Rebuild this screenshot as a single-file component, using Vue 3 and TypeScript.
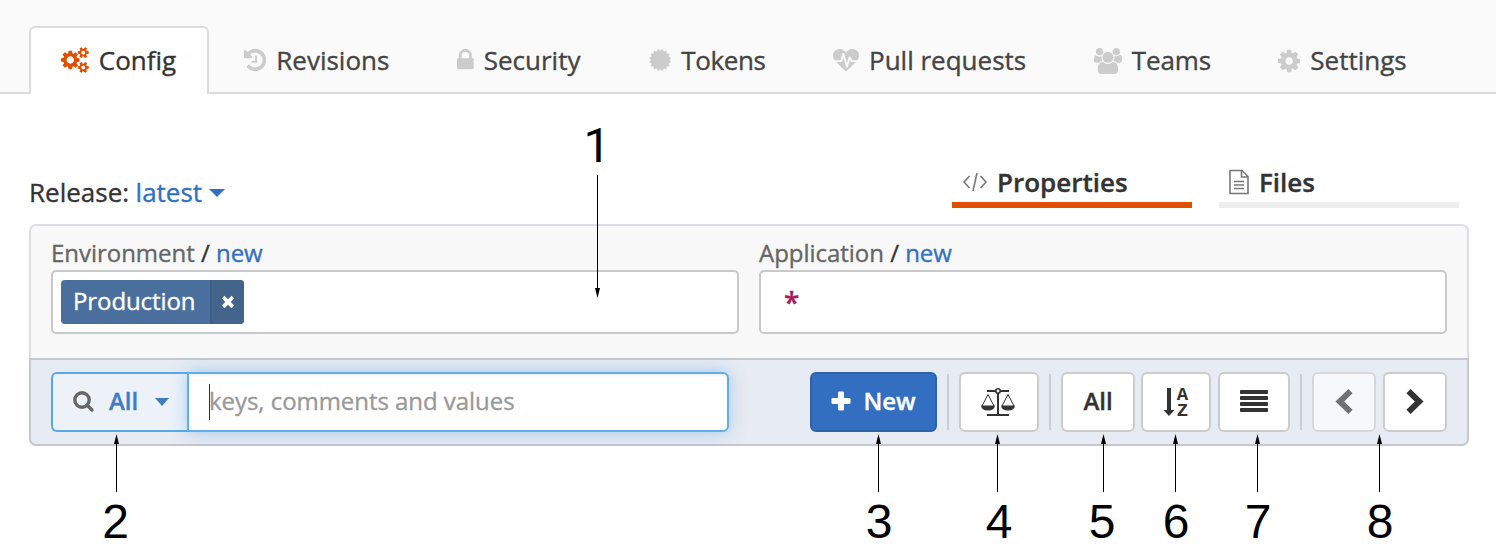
<script setup lang="ts">
interface Tab {
  id: string
  label: string
  box: string
  path: string
}

interface Callout {
  n: number
  textX: number
  arrowX: number
}

const seal = (() => {
  const pts: string[] = []
  const spikes = 16
  for (let i = 0; i < spikes * 2; i++) {
    const r = i % 2 ? 635 : 785
    const a = (Math.PI * i) / spikes + Math.PI / spikes
    pts.push(`${(896 + r * Math.sin(a)).toFixed(0)} ${(896 - r * Math.cos(a)).toFixed(0)}`)
  }
  return `M${pts.join('L')}z`
})()

const tabs: Tab[] = [
  {
    id: 'config',
    label: 'Config',
    box: '-64 0 1920 1792',
    path: 'M832 896q0-106-75-181t-181-75-181 75-75 181 75 181 181 75 181-75 75-181zm768 512q0-52-38-90t-90-38-90 38-38 90q0 53 37.5 90.5t90.5 37.5 90.5-37.5 37.5-90.5zm0-1024q0-52-38-90t-90-38-90 38-38 90q0 53 37.5 90.5t90.5 37.5 90.5-37.5 37.5-90.5zm-384 421v185q0 10-7 19.5t-16 10.5l-155 24q-11 35-32 76 34 48 90 115 7 11 7 20 0 12-7 19-23 30-82.5 89.5t-78.5 59.5q-11 0-21-7l-115-90q-37 19-77 31-11 108-23 155-7 24-30 24h-186q-11 0-20-7.5t-10-17.5l-23-153q-34-10-75-31l-118 89q-7 7-20 7-11 0-21-8-144-133-144-160 0-9 7-19 10-14 41-53t47-61q-23-44-35-82l-152-24q-10-1-17-9.5t-7-19.5v-185q0-10 7-19.5t16-10.5l155-24q11-35 32-76-34-48-90-115-7-11-7-20 0-12 7-20 22-30 82-89t79-59q11 0 21 7l115 90q34-18 77-32 11-108 23-154 7-24 30-24h186q11 0 20 7.5t10 17.5l23 153q34 10 75 31l118-89q8-7 20-7 11 0 21 8 144 133 144 160 0 8-7 19-12 16-42 54t-45 60q23 48 34 82l152 23q10 2 17 10.5t7 19.5zm640 533v140q0 16-149 31-12 27-30 52 51 113 51 138 0 4-4 7-122 71-124 71-8 0-46-47t-52-68q-20 2-30 2t-30-2q-14 21-52 68t-46 47q-2 0-124-71-4-3-4-7 0-25 51-138-18-25-30-52-149-15-149-31v-140q0-16 149-31 13-29 30-52-51-113-51-138 0-4 4-7 4-2 35-20t59-34 30-16q8 0 46 46.5t52 67.5q20-2 30-2t30 2q51-71 92-112l6-2q4 0 124 70 4 3 4 7 0 25-51 138 17 23 30 52 149 15 149 31zm0-1024v140q0 16-149 31-12 27-30 52 51 113 51 138 0 4-4 7-122 71-124 71-8 0-46-47t-52-68q-20 2-30 2t-30-2q-14 21-52 68t-46 47q-2 0-124-71-4-3-4-7 0-25 51-138-18-25-30-52-149-15-149-31v-140q0-16 149-31 13-29 30-52-51-113-51-138 0-4 4-7 4-2 35-20t59-34 30-16q8 0 46 46.5t52 67.5q20-2 30-2t30 2q51-71 92-112l6-2q4 0 124 70 4 3 4 7 0 25-51 138 17 23 30 52 149 15 149 31z',
  },
  {
    id: 'revisions',
    label: 'Revisions',
    box: '128 0 1536 1792',
    path: 'M1664 896q0 156-61 298t-164 245-245 164-298 61q-172 0-327-72.5t-264-204.5q-7-10-6.5-22.5t8.5-20.5l137-138q10-9 25-9 16 2 23 12 73 95 179 147t225 52q104 0 198.5-40.5t163.5-109.5 109.5-163.5 40.5-198.5-40.5-198.5-109.5-163.5-163.5-109.5-198.5-40.5q-98 0-188 35.5t-160 101.5l137 138q31 30 14 69-17 40-59 40h-448q-26 0-45-19t-19-45v-448q0-42 40-59 39-17 69 14l130 129q107-101 244.5-156.5t284.5-55.5q156 0 298 61t245 164 164 245 61 298zm-640-288v448q0 14-9 23t-23 9h-320q-14 0-23-9t-9-23v-64q0-14 9-23t23-9h224v-352q0-14 9-23t23-9h64q14 0 23 9t9 23z',
  },
  {
    id: 'security',
    label: 'Security',
    box: '320 0 1152 1792',
    path: 'M640 768h512v-192q0-106-75-181t-181-75-181 75-75 181v192zm832 96v576q0 40-28 68t-68 28h-960q-40 0-68-28t-28-68v-576q0-40 28-68t68-28h32v-192q0-184 132-316t316-132 316 132 132 316v192h32q40 0 68 28t28 68z',
  },
  { id: 'tokens', label: 'Tokens', box: '128 0 1536 1792', path: seal },
  {
    id: 'pulls',
    label: 'Pull requests',
    box: '0 0 1792 1792',
    path: 'M1280 896h305q-5 6-10 10.5t-9 7.5l-3 4-623 600q-18 18-44 18t-44-18l-624-602q-5-2-21-20h369q22 0 39.5-13.5t22.5-34.5l70-281 190 667q6 20 23 33t39 13q21 0 38-13t23-33l146-485 56 112q18 35 57 35zm512-428q0 145-103 300h-369l-111-221q-8-17-25.5-27t-36.5-8q-45 5-56 46l-129 430-196-686q-6-20-23.5-33t-39.5-13-39 13.5-22 34.5l-116 464h-423q-103-155-103-300 0-220 127-344t351-124q62 0 126.5 21.5t120 58 95.5 68.5 76 68q36-36 76-68t95.5-68.5 120-58 126.5-21.5q224 0 351 124t127 344z',
  },
  {
    id: 'teams',
    label: 'Teams',
    box: '0 0 1920 1792',
    path: 'M593 896q-162 5-265 128h-134q-82 0-138-40.5t-56-118.5q0-353 124-353 6 0 43.5 21t97.5 42.5 119 21.5q67 0 133-23-5 37-5 66 0 159 93 293zm1071 637q0 120-73 189.5t-194 69.5h-874q-121 0-194-69.5t-73-189.5q0-53 3.5-103.5t14-109 26.5-108.5 43-97.5 62-81 85.5-53.5 111.5-20q10 0 43 21.5t73 48 107 48 135 21.5 135-21.5 107-48 73-48 43-21.5q61 0 111.5 20t85.5 53.5 62 81 43 97.5 26.5 108.5 14 109 3.5 103.5zm-1024-1277q0 106-75 181t-181 75-181-75-75-181 75-181 181-75 181 75 75 181zm704 384q0 159-112.5 271.5t-271.5 112.5-271.5-112.5-112.5-271.5 112.5-271.5 271.5-112.5 271.5 112.5 112.5 271.5zm576 225q0 78-56 118.5t-138 40.5h-134q-103-123-265-128 93-134 93-293 0-29-5-66 66 23 133 23 59 0 119-21.5t97.5-42.5 43.5-21q124 0 124 353zm-128-609q0 106-75 181t-181 75-181-75-75-181 75-181 181-75 181 75 75 181z',
  },
  {
    id: 'settings',
    label: 'Settings',
    box: '128 0 1536 1792',
    path: 'M1152 896q0-106-75-181t-181-75-181 75-75 181 75 181 181 75 181-75 75-181zm512-109v222q0 12-8 23t-20 13l-185 28q-19 54-39 91 35 50 107 138 10 12 10 25t-9 23q-27 37-99 108t-94 71q-12 0-26-9l-138-108q-44 23-91 38-16 136-29 186-7 28-36 28h-222q-14 0-24.5-8.5t-11.5-21.5l-28-184q-49-16-90-37l-141 107q-10 9-25 9-14 0-25-11-126-114-165-168-7-10-7-23 0-12 8-23 15-21 51-66.5t54-70.5q-27-50-41-99l-183-27q-13-2-21-12.5t-8-23.5v-222q0-12 8-23t19-13l186-28q14-46 39-92-40-57-107-138-10-12-10-24 0-10 9-23 26-36 98.5-107.5t94.5-71.5q13 0 26 10l138 107q44-23 91-38 16-136 29-186 7-28 36-28h222q14 0 24.5 8.5t11.5 21.5l28 184q49 16 90 37l142-107q9-9 24-9 13 0 25 10 129 119 165 170 7 8 7 22 0 12-8 23-15 21-51 66.5t-54 70.5q26 50 41 98l183 28q13 2 21 12.5t8 23.5z',
  },
]

const callouts: Callout[] = [
  { n: 2, textX: 115.5, arrowX: 116.5 },
  { n: 3, textX: 879, arrowX: 878.5 },
  { n: 4, textX: 999, arrowX: 997.5 },
  { n: 5, textX: 1102, arrowX: 1103.5 },
  { n: 6, textX: 1176, arrowX: 1175.5 },
  { n: 7, textX: 1258, arrowX: 1257.5 },
  { n: 8, textX: 1380, arrowX: 1379.5 },
]
</script>

<template>
  <div class="page">
    <nav class="tabs">
      <a v-for="t in tabs" :key="t.id" class="tab" :class="[t.id, { active: t.id === 'config' }]">
        <svg class="tab-icon" :viewBox="t.box"><path :d="t.path" /></svg>
        <span>{{ t.label }}</span>
      </a>
    </nav>

    <div class="head">
      <div class="release">
        <span>Release:</span>
        <a class="link">latest</a>
        <i class="caret"></i>
      </div>
      <div class="views">
        <a class="view on">
          <svg class="code-icon" viewBox="0 0 26 20">
            <path d="M7.5 4 2 10l5.500 6M18.500 4 24 10l-5.500 6M15 1l-4 18" />
          </svg>
          <span>Properties</span>
        </a>
        <a class="view files">
          <svg class="file-icon" viewBox="0 0 20 26">
            <path d="M1 1.500h12l6 6V24.500H1zM12.500 1.500V8H19M5 12.500h10M5 16h10M5 19.500h10" />
          </svg>
          <span>Files</span>
        </a>
      </div>
    </div>

    <section class="panel">
      <div class="filters">
        <div class="field">
          <div class="label"><span class="name env">Environment</span> <b>/</b> <a class="link">new</a></div>
          <div class="box">
            <div class="tag">
              <span class="tag-text">Production</span>
              <span class="tag-x">
                <svg viewBox="0 0 12 12"><path d="M1.800 1.800 10.200 10.200M10.200 1.800 1.800 10.200" /></svg>
              </span>
            </div>
          </div>
        </div>
        <div class="field">
          <div class="label"><span class="name app">Application</span> <b>/</b> <a class="link">new</a></div>
          <div class="box"><span class="star">*</span></div>
        </div>
      </div>

      <div class="toolbar">
        <div class="search">
          <div class="scope">
            <svg class="glass" viewBox="0 0 22 22">
              <circle cx="9" cy="9" r="7.200" /><path d="M14.200 14.200 19 19" />
            </svg>
            <span class="strong">All</span>
            <i class="caret"></i>
          </div>
          <div class="query"><span class="placeholder">keys, comments and values</span></div>
        </div>
        <div class="actions">
          <div class="btn primary">
            <svg class="plus" viewBox="0 0 20 20">
              <rect x="0.500" y="7" width="19" height="6" rx="1.200" />
              <rect x="7" y="0.500" width="6" height="19" rx="1.200" />
            </svg>
            <span class="strong">New</span>
          </div>
          <i class="sep"></i>
          <div class="btn compare">
            <svg class="scales" viewBox="0 0 34 28">
              <path class="beam" d="M6 3h22M17 4v22M6 27h22" />
              <path class="thin" d="M1 18 7 6.500l6 11.500M21 18l6-11.500 6 11.500" />
              <circle cx="17" cy="3" r="2.200" />
              <path class="pan" d="M0 17.500h14q-.5 5-7 5T0 17.500zM20 17.500h14q-.5 5-7 5t-7-5z" />
            </svg>
          </div>
          <i class="sep"></i>
          <div class="btn all"><span class="strong">All</span></div>
          <div class="btn sort">
            <svg class="sort-icon" viewBox="0 0 26 30">
              <path d="M4 1h4v22h3.500L6 29 .500 23H4z" />
              <text x="19.500" y="13">A</text>
              <text x="19.500" y="29">Z</text>
            </svg>
          </div>
          <div class="btn list">
            <svg class="list-icon" viewBox="0 0 28 22">
              <rect v-for="i in 4" :key="i" x="0" :y="(i - 1) * 6" width="28" height="4" rx="0.700" />
            </svg>
          </div>
          <i class="sep"></i>
          <div class="btn nav prev">
            <svg class="chev" viewBox="0 0 18 26"><path d="M15.500 2.200 4.800 12.500l10.700 10.300" /></svg>
          </div>
          <div class="btn nav">
            <svg class="chev" viewBox="0 0 18 26"><path d="M2.500 2.200 13.200 12.500 2.500 22.800" /></svg>
          </div>
        </div>
      </div>
    </section>

    <svg class="callouts" viewBox="0 0 1496 554">
      <text class="first" x="597" y="162">1</text>
      <path class="line" d="M597.500 175V290" />
      <path d="M595 288h5l-2.500 10z" />
      <g v-for="c in callouts" :key="c.n">
        <text :x="c.textX" y="538">{{ c.n }}</text>
        <path class="line" :d="`M${c.arrowX} 440V492`" />
        <path :d="`M${c.arrowX - 2.5} 444h5l-2.500-10z`" />
      </g>
    </svg>
  </div>
</template>

<style>
body {
  margin: 0;
  background: #fff;
}
</style>

<style scoped>
.page {
  position: relative;
  width: 1496px;
  height: 554px;
  overflow: hidden;
  box-sizing: border-box;
  font-family: "Open Sans", "Noto Sans", sans-serif;
  font-size: 26px;
  color: #333;
  -webkit-text-stroke: 0.35px currentColor;
}
.page * {
  box-sizing: border-box;
}
.tabs {
  display: flex;
  align-items: flex-end;
  height: 94px;
  padding-left: 29px;
  background: #fafafa;
  box-shadow: inset 0 -2px #dcdcdc;
}
.tab {
  display: flex;
  align-items: center;
  height: 68px;
  padding-left: 35px;
  white-space: nowrap;
  color: #444;
}
.tab-icon {
  height: 26px;
  flex: none;
  margin-right: 10px;
  fill: #ccc;
}
.tab.active {
  width: 180px;
  padding: 0 0 2px 30px;
  background: #fff;
  border: 2px solid #dcdcdc;
  border-bottom: 0;
  border-radius: 6px 6px 0 0;
  color: #333;
}
.active .tab-icon {
  fill: #e04e00;
}
.revisions { width: 213px; }
.security { width: 192px; }
.tokens { width: 184px; letter-spacing: -0.4px; }
.pulls { width: 261px; }
.teams { width: 184px; letter-spacing: -0.15px; }
.pulls .tab-icon { margin-top: 3px; }
.teams .tab-icon { margin-top: 1px; }
.settings .tab-icon { margin-top: 1px; }
.head {
  display: flex;
  justify-content: space-between;
  height: 130px;
  padding: 64px 37px 0 29px;
}
.release {
  display: flex;
  align-items: center;
  height: 68px;
  gap: 6.500px;
}
.link {
  color: #3170c2;
}
.caret {
  border: 8px solid transparent;
  border-top: 8px solid #3170c2;
  border-bottom: 0;
}
.release .caret {
  margin-top: 2px;
}
.views {
  display: flex;
  gap: 27px;
}
.view {
  display: flex;
  align-items: center;
  width: 240px;
  height: 50px;
  padding: 4px 0 0 10px;
  border-bottom: 6px solid #eee;
  font-weight: 600;
}
.view.on {
  border-color: #e04e00;
}
.code-icon, .file-icon {
  fill: none;
  stroke: #777;
  stroke-width: 1.6;
}
.code-icon {
  width: 26px;
  height: 20px;
  margin-right: 9px;
}
.file-icon {
  width: 20px;
  height: 26px;
  margin: 0 10px 1px 0;
}
.panel {
  width: 1440px;
  margin-left: 29px;
}
.filters {
  display: flex;
  gap: 20px;
  height: 134px;
  padding: 10px 20px 0;
  background: #f8f8f8;
  border: 2px solid #dddee3;
  border-bottom: 0;
  border-radius: 7px 7px 0 0;
}
.field {
  width: 688px;
}
.label {
  height: 34px;
  line-height: 34px;
  font-size: 24px;
  letter-spacing: -0.03px;
}
.label .name {
  color: #666;
}
.label b {
  font-weight: 400;
}
.box {
  display: flex;
  align-items: center;
  height: 64px;
  padding-left: 8px;
  background: #fff;
  border: 2px solid #c9c9c9;
  border-radius: 5px;
}
.tag {
  display: flex;
  width: 183px;
  height: 44px;
  border-radius: 4px;
  overflow: hidden;
  background: #4a6f9d;
  color: #fff;
  font-size: 24px;
  line-height: 42px;
}
.tag-text {
  width: 149px;
  padding-left: 12px;
  letter-spacing: -0.1px;
}
.tag-x {
  display: flex;
  flex: 1;
  align-items: center;
  justify-content: center;
  background: #43648b;
  border-left: 2px solid #3d5c83;
}
.tag-x svg {
  width: 14px;
  height: 14px;
  margin: 0 1px 1px 0;
  stroke: #fff;
  stroke-width: 3.2;
}
.star {
  margin: -1px 0 0 15px;
  color: #a81b58;
  font-size: 28px;
  font-weight: 600;
}
.toolbar {
  display: flex;
  justify-content: space-between;
  height: 88px;
  padding: 12px 20px 0;
  background: #e7ebf3;
  border: 2px solid #c5c8ce;
  border-radius: 0 0 7px 7px;
}
.search {
  display: flex;
  width: 678px;
  height: 60px;
}
.scope {
  display: flex;
  align-items: center;
  width: 136px;
  padding-left: 20px;
  background: #edf2f9;
  border: 2px solid #57a8e6;
  border-right: 0;
  border-radius: 6px 0 0 6px;
  font-size: 24px;
  font-weight: 600;
  color: #417bc6;
}
.strong {
  padding-bottom: 3px;
}
.scope .caret {
  margin-left: 17px;
  border-width: 8px 7px 0;
  border-top-color: #417bc6;
}
.glass {
  width: 22px;
  height: 22px;
  margin-right: 14px;
  fill: none;
  stroke: #666;
  stroke-width: 3.4;
  stroke-linecap: round;
}
.query {
  display: flex;
  align-items: center;
  flex: 1;
  padding-left: 20px;
  background: #fff;
  border: 2px solid #62ade8;
  border-radius: 0 6px 6px 0;
  box-shadow: 0 0 16px rgba(98, 173, 232, 0.55), inset 0 2px 2px rgba(0, 0, 0, 0.05);
  font-size: 24px;
  color: #999;
}
.placeholder {
  height: 36px;
  line-height: 34px;
  border-left: 1px solid #333;
  letter-spacing: -0.05px;
  text-indent: -1px;
}
.actions {
  display: flex;
  align-items: flex-start;
}
.btn {
  display: flex;
  align-items: center;
  justify-content: center;
  height: 60px;
  background: #fff;
  border: 2px solid #ccc;
  border-radius: 6px;
  font-size: 24px;
  font-weight: 600;
}
.primary {
  width: 127px;
  gap: 12px;
  background: #336fc0;
  border-color: #2e63ab;
  color: #fff;
}
.plus {
  width: 20px;
  height: 20px;
  margin-bottom: 2px;
  fill: #fff;
}
.sep {
  width: 2px;
  height: 56px;
  margin: 2px 10px 0;
  background: #c5d0d3;
}
.compare { width: 80px; padding-right: 2px; }
.all { width: 74px; }
.sort { width: 70px; margin-left: 6px; }
.list { width: 72px; margin-left: 7px; padding-bottom: 2px; }
.nav { width: 64px; }
.prev {
  margin-right: 7px;
  background: #f7f8fb;
  border-color: #d5d7da;
}
.scales {
  width: 34px;
  height: 28px;
  fill: #333;
}
.scales .beam {
  stroke: #333;
  stroke-width: 2;
}
.scales circle {
  fill: #fff;
  stroke: #333;
  stroke-width: 1.6;
}
.scales .thin {
  fill: none;
  stroke: #333;
  stroke-width: 1;
}
.sort-icon {
  width: 26px;
  height: 30px;
  overflow: visible;
  fill: #333;
}
.sort-icon text {
  font: bold 19px "Liberation Mono", monospace;
  text-anchor: middle;
  -webkit-text-stroke: 0;
}
.list-icon {
  width: 28px;
  height: 22px;
  fill: #333;
}
.chev {
  width: 18px;
  height: 26px;
  fill: none;
  stroke: #333;
  stroke-width: 6;
}
.prev .chev {
  stroke: #707173;
}
.callouts {
  position: absolute;
  left: 0;
  top: 0;
  width: 1496px;
  height: 554px;
}
.callouts text {
  font: 48px "Liberation Sans", sans-serif;
  text-anchor: middle;
}
.callouts .first {
  font-family: Roboto, sans-serif;
}
.callouts .line {
  stroke: #000;
  stroke-width: 1;
}
</style>
